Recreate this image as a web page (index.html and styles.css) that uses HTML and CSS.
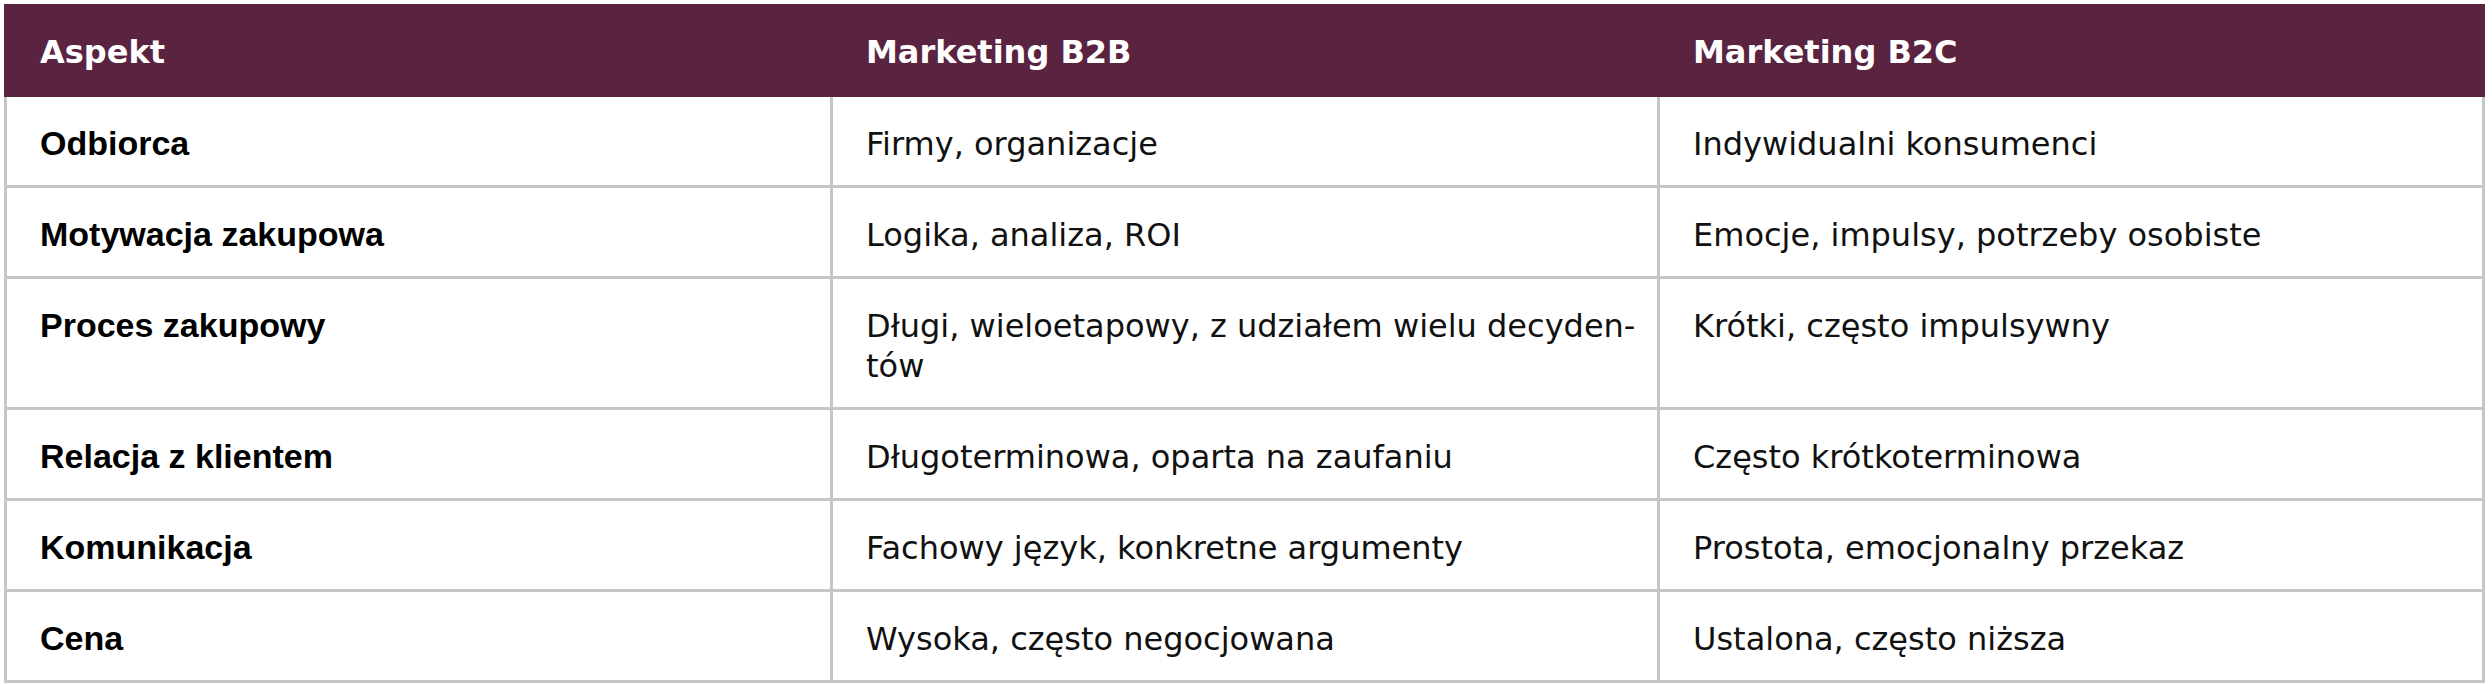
FILE: index.html
```html
<!DOCTYPE html>
<html lang="pl">
<head>
<meta charset="utf-8">
<title>B2B vs B2C</title>
<link rel="stylesheet" href="styles.css">
</head>
<body>
<div class="wrap">
<table class="cmp">
  <colgroup>
    <col class="c1">
    <col class="c2">
    <col class="c3">
  </colgroup>
  <thead>
    <tr><th>Aspekt</th><th>Marketing B2B</th><th>Marketing B2C</th></tr>
  </thead>
  <tbody>
    <tr><td>Odbiorca</td><td>Firmy, organizacje</td><td>Indywidualni konsumenci</td></tr>
    <tr><td>Motywacja zakupowa</td><td>Logika, analiza, ROI</td><td>Emocje, impulsy, potrzeby osobiste</td></tr>
    <tr><td>Proces zakupowy</td><td><span class="nowrap">Długi, wieloetapowy, z udziałem wielu decyden-</span><br>tów</td><td>Krótki, często impulsywny</td></tr>
    <tr><td>Relacja z klientem</td><td>Długoterminowa, oparta na zaufaniu</td><td>Często krótkoterminowa</td></tr>
    <tr><td>Komunikacja</td><td>Fachowy język, konkretne argumenty</td><td>Prostota, emocjonalny przekaz</td></tr>
    <tr><td>Cena</td><td>Wysoka, często negocjowana</td><td>Ustalona, często niższa</td></tr>
  </tbody>
</table>
</div>
</body>
</html>
```
FILE: styles.css
```css
html, body {
  margin: 0;
  padding: 0;
  background: #ffffff;
}

.wrap {
  padding: 4px 0 0 4px;
}

.cmp {
  table-layout: fixed;
  width: 2481px;
  border-collapse: separate;
  border-spacing: 0;
  font-family: "DejaVu Sans", sans-serif;
  font-size: 32px;
  line-height: 40px;
  color: #111111;
}

.c1 { width: 829px; }
.c2 { width: 827px; }
.c3 { width: 825px; }

.cmp th {
  background: #5a2340;
  color: #ffffff;
  font-weight: bold;
  text-align: left;
  padding: 28px 33px 25px 33px;
  border-right: 3px solid #5a2340;
  vertical-align: baseline;
}

.cmp th:first-child {
  border-left: 3px solid #5a2340;
}

.cmp td {
  padding: 26px 33px 21px 33px;
  border-right: 3px solid #c6c6c6;
  border-bottom: 3px solid #c6c6c6;
  vertical-align: baseline;
  font-weight: normal;
}

.cmp td:first-child {
  border-left: 3px solid #c6c6c6;
  font-family: "Liberation Sans", Arial, sans-serif;
  font-weight: bold;
  font-size: 34px;
  color: #000000;
}

.nowrap {
  white-space: nowrap;
}
```
